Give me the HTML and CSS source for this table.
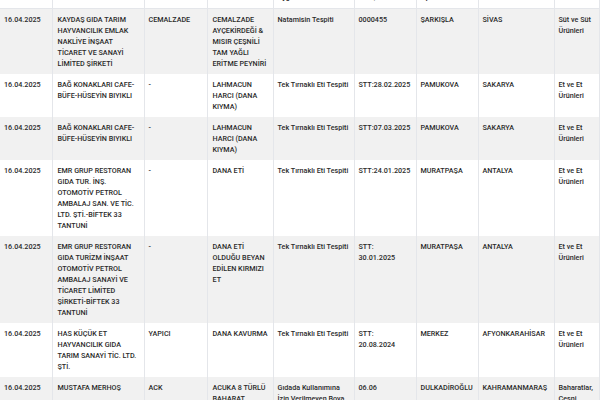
FILE: index.html
```html
<!DOCTYPE html>
<html lang="tr">
<head>
<meta charset="utf-8">
<title>Tespit Listesi</title>
<link rel="stylesheet" href="styles.css">
</head>
<body>
<div class="wrap">
<table class="list">
  <colgroup>
    <col class="c-date"><col class="c-firm"><col class="c-brand"><col class="c-product"><col class="c-issue"><col class="c-lot"><col class="c-district"><col class="c-city"><col class="c-group">
  </colgroup>
  <thead>
    <tr><th>Tarih</th><th>Firma Adı</th><th>Marka</th><th>Ürün Adı</th><th>Uygunsuzluk</th><th>Parti/Seri No</th><th>İlçe</th><th>İl</th><th>Ürün Grubu</th></tr>
  </thead>
  <tbody>
    <tr><td>16.04.2025</td><td>KAYDAŞ GIDA TARIM HAYVANCILIK EMLAK NAKLİYE İNŞAAT TİCARET VE SANAYİ LİMİTED ŞİRKETİ</td><td>CEMALZADE</td><td>CEMALZADE AYÇEKİRDEĞİ &amp; MISIR ÇEŞNİLİ TAM YAĞLI ERİTME PEYNİRİ</td><td>Natamisin Tespiti</td><td>0000455</td><td>ŞARKIŞLA</td><td>SİVAS</td><td>Süt ve Süt Ürünleri</td></tr>
    <tr><td>16.04.2025</td><td>BAĞ KONAKLARI CAFE-BÜFE-HÜSEYİN BIYIKLI</td><td>-</td><td>LAHMACUN HARCI (DANA KIYMA)</td><td>Tek Tırnaklı Eti Tespiti</td><td>STT:28.02.2025</td><td>PAMUKOVA</td><td>SAKARYA</td><td>Et ve Et Ürünleri</td></tr>
    <tr><td>16.04.2025</td><td>BAĞ KONAKLARI CAFE-BÜFE-HÜSEYİN BIYIKLI</td><td>-</td><td>LAHMACUN HARCI (DANA KIYMA)</td><td>Tek Tırnaklı Eti Tespiti</td><td>STT:07.03.2025</td><td>PAMUKOVA</td><td>SAKARYA</td><td>Et ve Et Ürünleri</td></tr>
    <tr><td>16.04.2025</td><td>EMR GRUP RESTORAN GIDA TUR. İNŞ. OTOMOTİV PETROL AMBALAJ SAN. VE TİC. LTD. ŞTİ.-BİFTEK 33 TANTUNİ</td><td>-</td><td>DANA ETİ</td><td>Tek Tırnaklı Eti Tespiti</td><td>STT:24.01.2025</td><td>MURATPAŞA</td><td>ANTALYA</td><td>Et ve Et Ürünleri</td></tr>
    <tr><td>16.04.2025</td><td>EMR GRUP RESTORAN GIDA TURİZM İNŞAAT OTOMOTİV PETROL AMBALAJ SANAYİ VE TİCARET LİMİTED ŞİRKETİ-BİFTEK 33 TANTUNİ</td><td>-</td><td>DANA ETİ OLDUĞU BEYAN EDİLEN KIRMIZI ET</td><td>Tek Tırnaklı Eti Tespiti</td><td>STT: 30.01.2025</td><td>MURATPAŞA</td><td>ANTALYA</td><td>Et ve Et Ürünleri</td></tr>
    <tr><td>16.04.2025</td><td>HAS KÜÇÜK ET HAYVANCILIK GIDA TARIM SANAYİ TİC. LTD. ŞTİ.</td><td>YAPICI</td><td>DANA KAVURMA</td><td>Tek Tırnaklı Eti Tespiti</td><td>STT: 20.08.2024</td><td>MERKEZ</td><td>AFYONKARAHİSAR</td><td>Et ve Et Ürünleri</td></tr>
    <tr><td>16.04.2025</td><td>MUSTAFA MERHOŞ</td><td>ACK</td><td>ACUKA 8 TÜRLÜ BAHARAT KARIŞIMI</td><td>Gıdada Kullanımına İzin Verilmeyen Boya Tespiti</td><td>06.06</td><td>DULKADİROĞLU</td><td>KAHRAMANMARAŞ</td><td>Baharatlar, Çeşni Maddeleri ve Soslar</td></tr>
  </tbody>
</table>
</div>
</body>
</html>
```

FILE: styles.css
```css
html, body {
  margin: 0;
  padding: 0;
  background: #ffffff;
}
.wrap {
  width: 600px;
  height: 400px;
  overflow: hidden;
}
.list {
  margin-top: -24px;
  width: 599px;
  table-layout: fixed;
  border-collapse: collapse;
  font-family: Roboto, "Liberation Sans", sans-serif;
  font-size: 7.2px;
  line-height: 11px;
  font-weight: 500;
  color: #2b2b2b;
}
.c-date { width: 52px; }
.c-firm { width: 92px; }
.c-brand { width: 63px; }
.c-product { width: 66px; }
.c-issue { width: 81px; }
.c-lot { width: 62px; }
.c-district { width: 62px; }
.c-city { width: 76px; }
.c-group { width: 45px; }
.list th,
.list td {
  padding: 5px 4px;
  text-align: left;
  vertical-align: top;
  border-left: 1px solid #e4e6ea;
  border-right: 1px solid #e4e6ea;
  overflow-wrap: normal;
}
.list td:nth-child(2),
.list td:nth-child(4) {
  padding-left: 5px;
}
.list th {
  font-weight: 700;
  vertical-align: bottom;
  border-bottom: 1px solid #e4e6ea;
  background: #ffffff;
}
.list th:first-child,
.list td:first-child {
  border-left: none;
  padding-left: 4px;
}
.list tbody tr:nth-child(odd) td {
  background: #f1f1f1;
}
.list tbody tr:nth-child(even) td {
  background: #ffffff;
}
```
